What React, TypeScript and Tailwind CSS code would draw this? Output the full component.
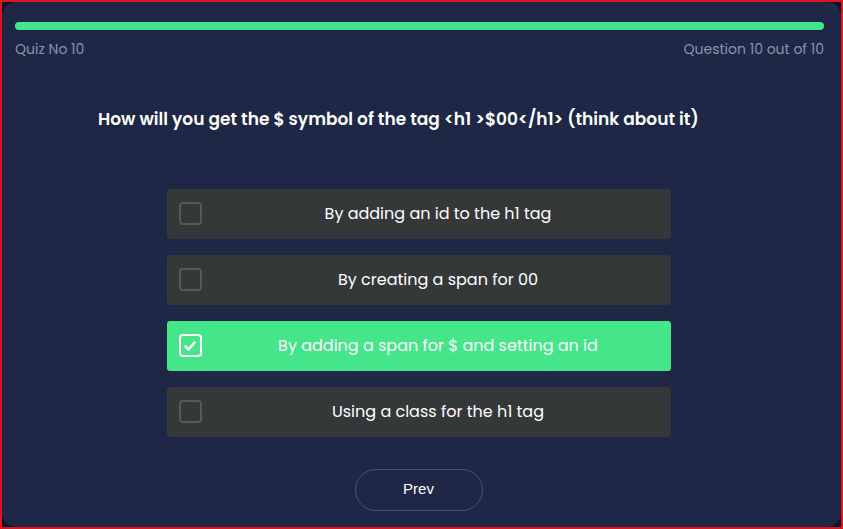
import React, { useState } from 'react';

const OPTIONS = [
  'By adding an id to the h1 tag',
  'By creating a span for 00',
  'By adding a span for $ and setting an id',
  'Using a class for the h1 tag',
];

const App: React.FC = () => {
  const [picked, setPicked] = useState(2);

  return (
    <div className="w-[843px] h-[529px] border-2 border-[#e0141e] bg-[#10112b] font-['Poppins','Inter','Noto_Sans',sans-serif]">
      <div className="h-full rounded-[14px] bg-[#1e2745] pl-[13px] pr-[17px] pt-[20px]">
        <div className="h-2 w-full rounded-full bg-[#45e68a]" />
        <div className="mt-[9px] flex justify-between text-[14px] text-[#8d93aa]">
          <span>Quiz No 10</span>
          <span>Question 10 out of 10</span>
        </div>

        <h2 className="mt-[47px] pl-[83px] text-[17px] font-semibold text-white">
          How will you get the $ symbol of the tag &lt;h1 &gt;$00&lt;/h1&gt; (think about it)
        </h2>

        <div className="mx-auto mt-[56px] flex w-[504px] -translate-x-px flex-col gap-4">
          {OPTIONS.map((opt, i) => {
            const on = picked === i;
            return (
              <button
                key={opt}
                onClick={() => setPicked(i)}
                className={`flex h-[50px] items-center rounded-[3px] pl-3 ${on ? 'bg-[#45e68a]' : 'bg-[#353839]'}`}
              >
                <span
                  className={`flex h-[23px] w-[23px] items-center justify-center rounded-[4px] border-2 ${on ? 'border-white' : 'border-[#56595c]'}`}
                >
                  {on && (
                    <svg width="14" height="14" viewBox="0 0 14 14" fill="none">
                      <path d="M2.5 7.5l3 3 6-7" stroke="white" strokeWidth="2.6" strokeLinecap="round" strokeLinejoin="round" />
                    </svg>
                  )}
                </span>
                <span className="ml-1 flex-1 text-center text-[16px] text-white">{opt}</span>
              </button>
            );
          })}
        </div>

        <div className="mt-[32px] flex justify-center">
          <button className="h-[42px] w-[128px] -translate-x-px rounded-full border border-[#4b5270] font-['Liberation_Sans',Arial,sans-serif] text-[15px] text-white">
            Prev
          </button>
        </div>
      </div>
    </div>
  );
};

export default App;
